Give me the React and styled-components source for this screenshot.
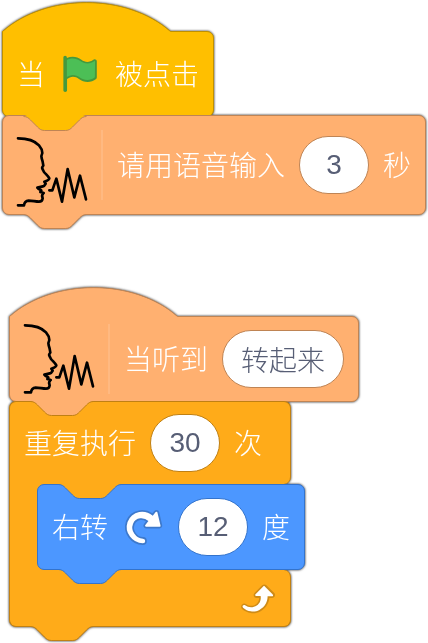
import React from "react";
import styled, { createGlobalStyle } from "styled-components";

const palette = {
  event: { fill: "#ffbf00", line: "#bf9000" },
  voice: { fill: "#ffb070", line: "#bf8454" },
  control: { fill: "#ffab19", line: "#c08013" },
  motion: { fill: "#4c97ff", line: "#3373cc" },
};

const GlobalStyle = createGlobalStyle`
  *, *::before, *::after { box-sizing: border-box; }
  body { margin: 0; background: #fff; }
  svg { display: block; flex: none; overflow: visible; }
`;

const Workspace = styled.main`
  display: flex;
  flex-direction: column;
  align-items: flex-start;
  gap: 72px;
  padding: 2px 2px 16px;
  font-family: "Liberation Sans", "Noto Sans CJK SC", sans-serif;
  font-size: 28px;
  font-weight: 300;
  line-height: 40px;
  color: #fff;
`;

const Script = styled.section`
  display: flex;
  flex-direction: column;
  align-items: flex-start;
  margin-left: ${(p) => p.$indent || 0}px;
  filter: drop-shadow(0 0 1px rgba(0, 0, 0, 0.5)) drop-shadow(0 0 1px rgba(0, 0, 0, 0.4));
`;

const BlockBox = styled.div`
  position: relative;
  display: flex;
  align-items: center;
  gap: 14px;
  min-height: ${(p) => p.$height}px;
  padding: 7px 14px;
  white-space: nowrap;
  background: ${(p) => p.$tone.fill};
  border: 1px solid ${(p) => p.$tone.line};
  border-radius: ${(p) => (p.$hat ? "0 7px 7px 7px" : "7px")};
  margin-top: ${(p) => (p.$stacked ? -2 : 0)}px;
`;

const Label = styled.label`
  padding-top: 4px;
`;

const HatSvg = styled.svg`
  position: relative;
  z-index: 1;
  margin-bottom: -1px;
`;

const ConnectorSvg = styled.svg`
  position: absolute;
  left: 20px;
  ${(p) => (p.$notch ? "top: -1px; z-index: 1;" : "bottom: -15px; z-index: 2;")}
`;

const Loop = styled.div`
  display: flex;
  flex-direction: column;
  align-items: flex-start;
  margin-top: -1px;
`;

const LoopArm = styled(BlockBox)`
  min-width: 282px;
  ${(p) =>
    p.$end
      ? "border-top: 0; border-top-left-radius: 0; justify-content: flex-end;"
      : "border-bottom: 0; border-bottom-left-radius: 0;"}
`;

const LoopMouth = styled.div`
  padding-left: 27px;
  border-left: 1px solid ${(p) => p.$tone.line};
  background: linear-gradient(${(p) => p.$tone.fill}, ${(p) => p.$tone.fill}) left /
    36px 100% no-repeat;
`;

const Divider = styled.span`
  width: 2px;
  height: 70px;
  background: rgba(255, 255, 255, 0.12);
`;

const ValueInput = styled.input`
  width: ${(p) => p.$width || 70}px;
  height: 58px;
  margin: 0;
  padding: 0;
  font: inherit;
  text-align: center;
  color: #575e75;
  background: #fff;
  border: 1px solid ${(p) => p.$tone.line};
  border-radius: 29px;
  outline: 0;
`;

const FaceSvg = styled.svg`
  align-self: flex-end;
`;

function Hat({ tone }) {
  const curve = "C44,-9 125,-9 168.5,29.5";
  return (
    <HatSvg width="170" height="30" viewBox="0 0 170 30" aria-hidden="true">
      <path d={`M0.5,29.5 ${curve} V30 H0.5 Z`} fill={tone.fill} />
      <path d={`M0.5,30 V29.5 ${curve}`} fill="none" stroke={tone.line} />
    </HatSvg>
  );
}

function Connector({ tone, line, notch }) {
  const edge =
    "c3.5,0 5.25,1.75 7,3.5 l7,7 c1.75,1.75 3.5,3.5 7,3.5 h21 c3.5,0 5.25,-1.75 7,-3.5 l7,-7 c1.75,-1.75 3.5,-3.5 7,-3.5";
  return (
    <ConnectorSvg $notch={notch} width="64" height="15" viewBox="0 0 64 15" aria-hidden="true">
      <path d={`M0.5,0.5 ${edge} L60,-1 H4 Z`} fill={tone.fill} />
      <path d={`M0.5,0.5 ${edge}`} fill="none" stroke={line || tone.line} />
    </ConnectorSvg>
  );
}

function FlagIcon() {
  return (
    <svg width="42" height="42" viewBox="0 0 24 24" role="img" aria-label="绿旗">
      <path
        fill="#45993d"
        d="M20.8,3.7c-0.4-0.2-0.9-0.1-1.2,0.2c-2,1.6-4.8,1.6-6.8,0c-2.3-1.9-5.6-2.3-8.3-1v-0.4c0-0.6-0.5-1-1-1s-1,0.4-1,1v18.8c0,0.5,0.5,1,1,1h0.1c0.5,0,1-0.5,1-1v-6.4c1-0.7,2.1-1.2,3.4-1.3c1.2,0,2.4,0.4,3.4,1.2c2.9,2.3,7,2.3,9.8,0c0.3-0.2,0.4-0.5,0.4-0.9V4.7C21.6,4.2,21.3,3.8,20.8,3.7z"
      />
      <path
        fill="#4cbf56"
        d="M20.6,4.8l-0.1,9.1c-2.5,2-6.1,2-8.6,0.1c-1.1-0.9-2.5-1.4-4-1.4c-1.2,0.1-2.3,0.5-3.4,1.1V4C7,2.6,10,2.9,12.2,4.6c2.4,1.9,5.7,1.9,8.1,0c0.1,0,0.1,0,0.2,0C20.5,4.7,20.6,4.7,20.6,4.8z"
      />
    </svg>
  );
}

function SpeakingFaceIcon() {
  return (
    <FaceSvg
      width="70"
      height="70"
      viewBox="51 96 210 210"
      fill="none"
      stroke="#000"
      strokeWidth="8"
      strokeLinecap="round"
      strokeLinejoin="round"
      aria-hidden="true"
    >
      <path d="M54,100 C88,100 106,109 117,121 C124,129 127,136 127,144 C124,150 123,154 125,160 C128,168 129,174 130,182 C126,186 125,189 128,193 L132,201 C138,208 145,214 148,220 C148,225 143,227 133,230 L137,236 L132,243 C125,245 119,247 112,248 C115,252 120,254 124,256 L121,261 L131,264 C124,269 125,273 128,280 C127,288 123,290 117,290 C106,290 98,287 86,287 C76,288 73,293 72,301 L54,301" />
      <path d="M148,256 H157 L169,221 L186,290 L203,192 L223,277 L240,212 L258,283" />
    </FaceSvg>
  );
}

function TurnRightIcon() {
  return (
    <svg width="42" height="42" viewBox="0 0 24 24" role="img" aria-label="顺时针">
      <path
        fill="#3d79cc"
        d="M22.68,12.2a1.6,1.6,0,0,1-1.27.63H13.72a1.59,1.59,0,0,1-1.16-2.58l1.12-1.41a4.82,4.82,0,0,0-3.14-.77,4.31,4.31,0,0,0-2,.8,4.25,4.25,0,0,0-1.34,1.73,5.06,5.06,0,0,0,.54,4.62A5.58,5.58,0,0,0,12,17.74h0a2.26,2.26,0,0,1-.16,4.52A10.25,10.25,0,0,1,3.74,18,10.14,10.14,0,0,1,2.25,8.78,9.7,9.7,0,0,1,5.08,4.64,9.92,9.92,0,0,1,9.66,2.5a10.66,10.66,0,0,1,7.72,1.68l1.08-1.35a1.57,1.57,0,0,1,1.24-.6,1.6,1.6,0,0,1,1.54,1.21l1.7,7.37A1.57,1.57,0,0,1,22.68,12.2Z"
      />
      <path
        fill="#fff"
        d="M21.38,11.83H13.77a.59.59,0,0,1-.43-1l1.75-2.19a5.9,5.9,0,0,0-4.7-1.58,5.07,5.07,0,0,0-4.11,3.17A6,6,0,0,0,7,15.77a6.51,6.51,0,0,0,5,2.92,1.31,1.31,0,0,1-.08,2.62,9.3,9.3,0,0,1-7.35-3.82A9.16,9.16,0,0,1,3.17,9.12,8.51,8.51,0,0,1,5.71,5.4,8.76,8.76,0,0,1,9.82,3.48a9.71,9.71,0,0,1,7.75,2.07l1.67-2.1a.59.59,0,0,1,1,.21L22,11.08A.59.59,0,0,1,21.38,11.83Z"
      />
    </svg>
  );
}

function RepeatIcon() {
  return (
    <svg width="42" height="42" viewBox="0 0 24 24" aria-hidden="true">
      <path
        fill="#cf8b17"
        d="M23.3,11c-0.3,0.6-0.9,1-1.5,1h-1.6c-0.1,1.3-0.5,2.5-1.1,3.6c-0.9,1.7-2.3,3.2-4.1,4.1c-1.7,0.9-3.6,1.2-5.5,0.9c-1.8-0.3-3.5-1.1-4.9-2.3c-0.7-0.7-0.7-1.9,0-2.6c0.6-0.6,1.6-0.7,2.3-0.2H7c0.9,0.6,1.9,0.9,2.9,0.9s1.9-0.3,2.7-0.9c1.1-0.8,1.8-2.1,1.8-3.5h-1.5c-0.9,0-1.7-0.7-1.7-1.7c0-0.4,0.2-0.9,0.5-1.2l4.4-4.4c0.7-0.6,1.7-0.6,2.4,0L23,9.2C23.5,9.7,23.6,10.4,23.3,11z"
      />
      <path
        fill="#fff"
        d="M21.8,11h-2.6c0,1.5-0.3,2.9-1,4.2c-0.8,1.6-2.1,2.8-3.7,3.6c-1.5,0.8-3.3,1.1-4.9,0.8c-1.6-0.2-3.2-1-4.4-2.1c-0.4-0.3-0.4-0.9-0.1-1.2c0.3-0.4,0.9-0.4,1.2-0.1l0,0c1,0.7,2.2,1.1,3.4,1.1s2.3-0.3,3.3-1c0.9-0.6,1.6-1.5,2-2.6c0.3-0.9,0.4-1.8,0.2-2.8h-2.4c-0.4,0-0.7-0.3-0.7-0.7c0-0.2,0.1-0.3,0.2-0.4l4.4-4.4c0.3-0.3,0.7-0.3,0.9,0L22,9.8c0.3,0.3,0.4,0.6,0.3,0.9S22,11,21.8,11z"
      />
    </svg>
  );
}

export default function App() {
  const { event, voice, control, motion } = palette;
  return (
    <Workspace>
      <GlobalStyle />
      <Script>
        <Hat tone={event} />
        <BlockBox $tone={event} $height={86} $hat>
          <Label as="span">当</Label>
          <FlagIcon />
          <Label as="span">被点击</Label>
          <Connector tone={event} line={voice.line} />
        </BlockBox>
        <BlockBox $tone={voice} $height={100} $stacked>
          <SpeakingFaceIcon />
          <Divider />
          <Label htmlFor="seconds">请用语音输入</Label>
          <ValueInput id="seconds" $tone={voice} defaultValue="3" />
          <Label as="span">秒</Label>
          <Connector tone={voice} />
        </BlockBox>
      </Script>

      <Script $indent={7}>
        <Hat tone={voice} />
        <BlockBox $tone={voice} $height={86} $hat>
          <SpeakingFaceIcon />
          <Divider />
          <Label htmlFor="phrase">当听到</Label>
          <ValueInput id="phrase" $tone={voice} $width={122} defaultValue="转起来" />
          <Connector tone={voice} line={control.line} />
        </BlockBox>
        <Loop>
          <LoopArm $tone={control} $height={83}>
            <Label htmlFor="times">重复执行</Label>
            <ValueInput id="times" $tone={control} defaultValue="30" />
            <Label as="span">次</Label>
          </LoopArm>
          <LoopMouth $tone={control}>
            <BlockBox $tone={motion} $height={86}>
              <Connector notch tone={control} line={motion.line} />
              <Label htmlFor="degrees">右转</Label>
              <TurnRightIcon />
              <ValueInput id="degrees" $tone={motion} defaultValue="12" />
              <Label as="span">度</Label>
              <Connector tone={motion} />
            </BlockBox>
          </LoopMouth>
          <LoopArm $tone={control} $height={56} $end>
            <RepeatIcon />
            <Connector tone={control} />
          </LoopArm>
        </Loop>
      </Script>
    </Workspace>
  );
}
